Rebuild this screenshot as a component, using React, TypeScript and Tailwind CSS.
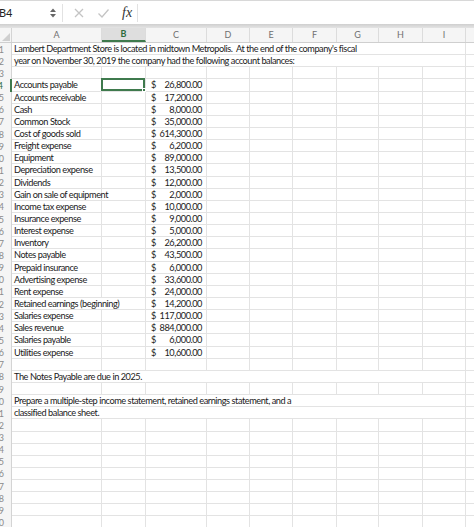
import React from 'react'

const COLS = [
  { key: 'A', w: 'w-[90px]' },
  { key: 'B', w: 'w-[44px]' },
  { key: 'C', w: 'w-[61px]' },
  { key: 'D', w: 'w-[43px]' },
  { key: 'E', w: 'w-[43px]' },
  { key: 'F', w: 'w-[44px]' },
  { key: 'G', w: 'w-[42px]' },
  { key: 'H', w: 'w-[44px]' },
  { key: 'I', w: 'w-[43px]' }
]

const balances: [string, string][] = [
  ['Accounts payable', '26,800.00'],
  ['Accounts receivable', '17,200.00'],
  ['Cash', '8,000.00'],
  ['Common Stock', '35,000.00'],
  ['Cost of goods sold', '614,300.00'],
  ['Freight expense', '6,200.00'],
  ['Equipment', '89,000.00'],
  ['Depreciation expense', '13,500.00'],
  ['Dividends', '12,000.00'],
  ['Gain on sale of equipment', '2,000.00'],
  ['Income tax expense', '10,000.00'],
  ['Insurance expense', '9,000.00'],
  ['Interest expense', '5,000.00'],
  ['Inventory', '26,200.00'],
  ['Notes payable', '43,500.00'],
  ['Prepaid insurance', '6,000.00'],
  ['Advertising expense', '33,600.00'],
  ['Rent expense', '24,000.00'],
  ['Retained earnings (beginning)', '14,200.00'],
  ['Salaries expense', '117,000.00'],
  ['Sales revenue', '884,000.00'],
  ['Salaries payable', '6,000.00'],
  ['Utilities expense', '10,600.00']
]

// long notes that spill over the empty cells to their right
const notes: Record<number, string> = {
  1: "Lambert Department Store is located in midtown Metropolis.  At the end of the company's fiscal",
  2: 'year on November 30, 2019 the company had the following account balances:',
  28: 'The Notes Payable are due in 2025.',
  30: 'Prepare a multiple-step income statement, retained earnings statement, and a',
  31: 'classified balance sheet.'
}

function FormulaBar() {
  return (
    <div className="h-[28px] flex flex-col">
      <div className="h-[24px] flex items-center bg-white border-t border-[#d8d8d8]">
        <div className="w-[49px] shrink-0 text-[11px] tracking-normal text-[#222] -ml-[1px] pt-[1px]">B4</div>
        <svg width="8" height="12" viewBox="0 0 8 12" className="shrink-0 ml-[1px]">
          <path d="M4 1.5 L7 5 L1 5 Z" fill="#666" />
          <path d="M4 10.5 L7 7 L1 7 Z" fill="#666" />
        </svg>
        <div className="w-px h-[18px] bg-[#e2e2e2] ml-[5px] shrink-0" />
        <svg width="12" height="12" viewBox="0 0 12 12" className="ml-[10px] shrink-0">
          <path d="M2 2 L10 10 M10 2 L2 10" stroke="#c4c4c4" strokeWidth="1.3" />
        </svg>
        <svg width="13" height="12" viewBox="0 0 13 12" className="ml-[12px] shrink-0">
          <path d="M1.5 6.5 L5 10 L11.5 2.5" stroke="#c4c4c4" strokeWidth="1.3" fill="none" />
        </svg>
        <span className="ml-[12px] text-[14px] tracking-normal italic text-[#333] [font-family:'Liberation_Serif',serif]">fx</span>
        <div className="w-px h-[18px] bg-[#e2e2e2] ml-[5px] shrink-0" />
        <div className="flex-1" />
      </div>
      <div className="h-[4px] bg-gradient-to-b from-[#cfcfcf] to-[#e4e4e4]" />
    </div>
  )
}

function HeaderRow() {
  return (
    <div className="h-[15px] flex bg-[#f5f5f5] border-b border-[#cfcfcf] text-[9px] tracking-normal text-[#707070]">
      <div className="w-[12px] shrink-0 relative border-r border-[#d4d4d4]">
        <svg width="8" height="8" viewBox="0 0 8 8" className="absolute right-[1px] bottom-[1px]">
          <path d="M8 0 L8 8 L0 8 Z" fill="#cfcfcf" />
        </svg>
      </div>
      {COLS.map((c) => (
        <div
          key={c.key}
          className={`${c.w} shrink-0 flex items-center justify-center border-r border-[#dcdcdc] ${
            c.key === 'B' ? 'bg-[#dedede] text-[#2d6b3c] font-bold border-b-2 border-b-[#3f7a4d]' : ''
          }`}
        >
          {c.key}
        </div>
      ))}
      <div className="flex-1" />
    </div>
  )
}

function Row({ n }: { n: number }) {
  const item = n >= 4 && n <= 26 ? balances[n - 4] : null
  const note = notes[n]
  const active = n === 4

  return (
    <div className="h-[12.15px] flex">
      <div
        className={`w-[12px] shrink-0 overflow-hidden flex justify-end pr-[7px] items-center bg-[#f5f5f5] text-[9px] tracking-normal leading-none ${
          active ? 'border-r-2 border-[#3f7a4d] text-[#2d6b3c]' : 'border-r border-[#d4d4d4] text-[#8a8a8a]'
        }`}
      >
        <span className="whitespace-nowrap shrink-0">{n}</span>
      </div>
      {note ? (
        <>
          <div className="w-[454px] shrink-0 border-b border-r border-[#e3e3e3] pl-[2px] whitespace-pre leading-[12px]">
            {note}
          </div>
          <div className="flex-1 border-b border-[#e3e3e3]" />
        </>
      ) : (
        <>
          {COLS.map((c, i) => {
            // A22 overflows into the empty B cell
            const spill = item && item[0].startsWith('Retained')
            if (spill && i === 1) return null
            const width = spill && i === 0 ? 'w-[134px]' : c.w
            return (
              <div
                key={c.key}
                className={`${width} shrink-0 relative border-b border-r border-[#e3e3e3] leading-[12px] whitespace-nowrap`}
              >
                {item && i === 0 && <span className="pl-[2px]">{item[0]}</span>}
                {item && i === 2 && (
                  <div className="flex justify-between pl-[5px] pr-[4px]">
                    <span>$</span>
                    <span>{item[1]}</span>
                  </div>
                )}
                {active && i === 1 && (
                  <div className="absolute -left-[1px] -top-[1px] right-0 bottom-0 border-2 border-[#3f7a4d]">
                    <div className="absolute -right-[3px] -bottom-[3px] w-[4px] h-[4px] bg-[#3f7a4d] border border-white" />
                  </div>
                )}
              </div>
            )
          })}
          <div className="flex-1 border-b border-[#e3e3e3]" />
        </>
      )}
    </div>
  )
}

export default function App() {
  const rows = Array.from({ length: 40 }, (_, i) => i + 1)
  return (
    <div className="w-[474px] h-[527px] overflow-hidden bg-white text-[9.2px] tracking-[-0.45px] text-[#1a1a1a] [font-family:Lato,'Liberation_Sans',sans-serif]">
      <FormulaBar />
      <HeaderRow />
      {rows.map((n) => (
        <Row key={n} n={n} />
      ))}
    </div>
  )
}
